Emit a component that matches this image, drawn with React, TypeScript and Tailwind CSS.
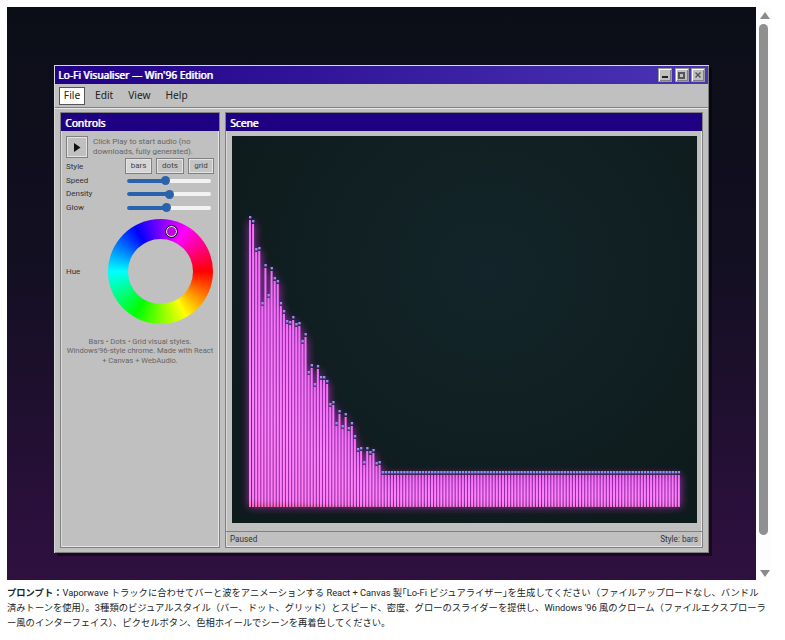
import React from 'react';

const TOPS = [217, 221, 249, 248, 303, 265, 295, 268, 278, 281, 303, 311, 321, 322, 317, 324, 323, 341, 334, 372, 365, 384, 366, 377, 377, 381, 404, 402, 423, 411, 426, 414, 428, 423, 436, 449, 448, 462, 448, 452, 450, 463, 462];
const BAR_COUNT = 140;

const raised = 'shadow-[inset_1px_1px_0_#ffffff,inset_-1px_-1px_0_#808080]';
const soft = 'shadow-[inset_0_0_0_1px_#e4e4e4]';
const panel = 'shadow-[inset_1px_0_0_#dadada,inset_-1px_-1px_0_#e6e6e6]';
const small = "font-['Roboto',sans-serif]";

const BarChart = () => (
  <svg width="465" height="387" viewBox="0 0 465 387" className="block">
    <defs>
      <linearGradient id="barFill" x1="0" y1="0" x2="0" y2="1">
        <stop offset="0" stopColor="#f070f6" />
        <stop offset="0.6" stopColor="#ff84fd" />
        <stop offset="0.97" stopColor="#ff80f2" />
        <stop offset="1" stopColor="#ff6aa8" />
      </linearGradient>
      <filter id="glow" x="-10%" y="-10%" width="120%" height="120%">
        <feGaussianBlur stdDeviation="4" />
      </filter>
    </defs>
    <g filter="url(#glow)" opacity="0.8">
      {Array.from({ length: BAR_COUNT }, (_, i) => {
        const top = TOPS[i] ?? 472;
        return <rect key={i} x={17 + i * 3.085} y={top - 133} width="2.8" height={507 - top - 3} fill="#d030e0" />;
      })}
    </g>
    {Array.from({ length: BAR_COUNT }, (_, i) => {
      const top = TOPS[i] ?? 472;
      const x = 17 + i * 3.085;
      return (
        <g key={i}>
          <rect x={x} y={top - 136 + 3} width="2" height={507 - top - 3} fill="url(#barFill)" />
          <rect x={x} y={top - 136 - 1} width="2.3" height="2.4" fill="#8a96f6" />
        </g>
      );
    })}
  </svg>
);

const Slider = ({ label, thumb }: { label: string; thumb: number }) => (
  <div className="flex items-center h-[13.5px]">
    <span className={`w-[61px] text-[8px] text-[#333] ${small}`}>{label}</span>
    <div className="relative w-[84px] h-[4px] rounded-full bg-[#f2f2f2]">
      <div className="h-full rounded-full bg-[#2a63ad]" style={{ width: thumb }} />
      <div className="absolute top-[-2.5px] w-[9px] h-[9px] rounded-full bg-[#2a63ad]" style={{ left: thumb - 4.5 }} />
    </div>
  </div>
);

const StyleButton = ({ label, width, active }: { label: string; width: string; active?: boolean }) => (
  <button className={`${width} h-[16px] flex items-center justify-center border border-[#808080] text-[8px] text-[#444] ${small} ${soft} ${active ? 'bg-[#d6d6d6]' : 'bg-[#c4c4c4]'}`}>
    {label}
  </button>
);

const WinButton = ({ children }: { children: React.ReactNode }) => (
  <div className={`w-[14px] h-[14px] flex items-center justify-center bg-[#c0c0c0] border border-[#9a9a9a] ${raised}`}>
    {children}
  </div>
);

const PanelHeader = ({ title }: { title: string }) => (
  <div className="h-[18px] bg-[#1e0082] flex items-center pl-[4px] pt-[3px] text-[10.2px] text-white [text-shadow:0.7px_0_0_#ffffff]">{title}</div>
);

export default function App() {
  return (
    <div className="w-[785px] h-[640px] overflow-hidden bg-white font-['Noto_Sans',sans-serif]">
      <div className="flex pt-[7px] pl-[7px] h-[580px]">
        <div className="w-[749px] h-[573px] pt-[58px] flex justify-center bg-[linear-gradient(to_bottom,#0b0e17,#130f22_45%,#2f1040)]">
          <div className="w-[655px] h-[488px] flex flex-col p-[1px] bg-[#c0c0c0] shadow-[inset_1px_1px_0_#d8d8d8,inset_-1px_-1px_0_#808080,3px_3px_0_rgba(0,0,0,0.45)]">
            <div className="h-[18px] flex items-center justify-between pl-[3px] pr-[3px] bg-[linear-gradient(to_right,#200086,#4a35b3)]">
              <span className="pt-[2px] text-[10.2px] text-white [text-shadow:0.7px_0_0_#ffffff]">Lo-Fi Visualiser — Win'96 Edition</span>
              <div className="flex gap-[2.5px]">
                <WinButton><div className="w-[6px] h-[2px] mt-[3px] bg-[#222]" /></WinButton>
                <WinButton><div className="w-[7px] h-[7px] border-2 border-[#555]" /></WinButton>
                <WinButton>
                  <svg width="6" height="6" viewBox="0 0 6 6"><path d="M0.5 0.5l5 5M5.5 0.5l-5 5" stroke="#555" strokeWidth="1.4" /></svg>
                </WinButton>
              </div>
            </div>
            <div className="h-[24px] flex items-center gap-[5px] pl-[4px] border-b border-[#808080] text-[10.2px] text-[#222]">
              <span className="h-[18px] w-[26px] pt-[1px] flex items-center justify-center bg-white border border-[#555]">File</span>
              <span className="px-[5px] pt-[1px]">Edit</span>
              <span className="px-[5px] pt-[1px]">View</span>
              <span className="px-[5px] pt-[1px]">Help</span>
            </div>
            <div className="flex-1 flex gap-[5px] pt-[4px] px-[5px] pb-[4px] shadow-[inset_0_1px_0_#e8e8e8]">
              <div className={`w-[160px] flex flex-col border border-[#808080] ${panel}`}>
                <PanelHeader title="Controls" />
                <div className="flex-1 flex flex-col pl-[5px] pr-[5px] pt-[5px]">
                  <div className="flex items-center gap-[5px]">
                    <button className={`w-[22px] h-[22px] shrink-0 flex items-center justify-center border border-[#808080] ${soft}`}>
                      <svg width="8" height="9" viewBox="0 0 8 9"><path d="M1 0l6.5 4.5L1 9z" fill="#111" /></svg>
                    </button>
                    <p className={`text-[8px] leading-[10px] text-[#666] ${small}`}>Click Play to start audio (no downloads, fully generated).</p>
                  </div>
                  <div className="flex items-center justify-between h-[16px]">
                    <span className={`pt-[1px] text-[8px] text-[#333] ${small}`}>Style</span>
                    <div className="flex gap-[4px]">
                      <StyleButton label="bars" width="w-[27px]" active />
                      <StyleButton label="dots" width="w-[28px]" />
                      <StyleButton label="grid" width="w-[26px]" />
                    </div>
                  </div>
                  <div>
                    <Slider label="Speed" thumb={38} />
                    <Slider label="Density" thumb={42} />
                    <Slider label="Glow" thumb={39} />
                  </div>
                  <div className="flex items-center mt-[4px]">
                    <span className={`w-[42px] pt-[1px] text-[8px] text-[#333] ${small}`}>Hue</span>
                    <div className="relative w-[105px] h-[105px] rounded-full bg-[conic-gradient(from_90deg,#ff0000,#ffff00,#00ff00,#00ffff,#0000ff,#ff00ff,#ff0000)]">
                      <div className="absolute left-[20px] top-[20px] w-[65px] h-[65px] rounded-full bg-[#c0c0c0]" />
                      <div className="absolute left-[58px] top-[7px] w-[11px] h-[11px] rounded-full bg-[#c000e0] border border-white outline outline-[#111]" />
                    </div>
                  </div>
                  <p className={`mt-[13px] text-center text-[7.6px] leading-[9.5px] text-[#666] ${small}`}>
                    Bars • Dots • Grid visual styles.<br />Windows'96-style chrome. Made with React<br />+ Canvas + WebAudio.
                  </p>
                </div>
              </div>
              <div className={`flex-1 flex flex-col border border-[#808080] ${panel}`}>
                <PanelHeader title="Scene" />
                <div className="pl-[6px] pt-[5px]">
                  <div className="w-[465px] h-[387px] bg-[radial-gradient(ellipse_at_55%_35%,#13252a,#0e1b1c_80%)]">
                    <BarChart />
                  </div>
                </div>
                <div className={`mt-[8px] flex-1 flex items-center justify-between pl-[4px] pr-[4px] border-t border-[#808080] text-[8.2px] text-[#333] ${small}`}>
                  <span>Paused</span>
                  <span>Style: bars</span>
                </div>
              </div>
            </div>
          </div>
        </div>
        <div className="relative w-[15px] h-[573px] bg-[#fdfdfd]">
          <div className="absolute left-[4px] top-[5px] w-0 h-0 border-x-[5px] border-x-transparent border-b-[7px] border-b-[#8a8a8a]" />
          <div className="absolute left-[3px] top-[17px] w-[9px] h-[511px] rounded-full bg-[#909090]" />
          <div className="absolute left-[4px] bottom-[3px] w-0 h-0 border-x-[5px] border-x-transparent border-t-[7px] border-t-[#8a8a8a]" />
        </div>
      </div>
      <p className="pl-[7px] pt-[5px] whitespace-nowrap text-[9.3px] leading-[15.2px] text-[#222] font-['Roboto','Noto_Sans_CJK_JP',sans-serif]">
        <strong>プロンプト：</strong>Vaporwave トラックに合わせてバーと波をアニメーションする React + Canvas 製｢Lo-Fi ビジュアライザー｣を生成してください（ファイルアップロードなし、バンドル<br />済みトーンを使用）。3種類のビジュアルスタイル（バー、ドット、グリッド）とスピード、密度、グローのスライダーを提供し、Windows '96 風のクローム（ファイルエクスプローラ<br />ー風のインターフェイス）、ピクセルボタン、色相ホイールでシーンを再着色してください。
      </p>
    </div>
  );
}
